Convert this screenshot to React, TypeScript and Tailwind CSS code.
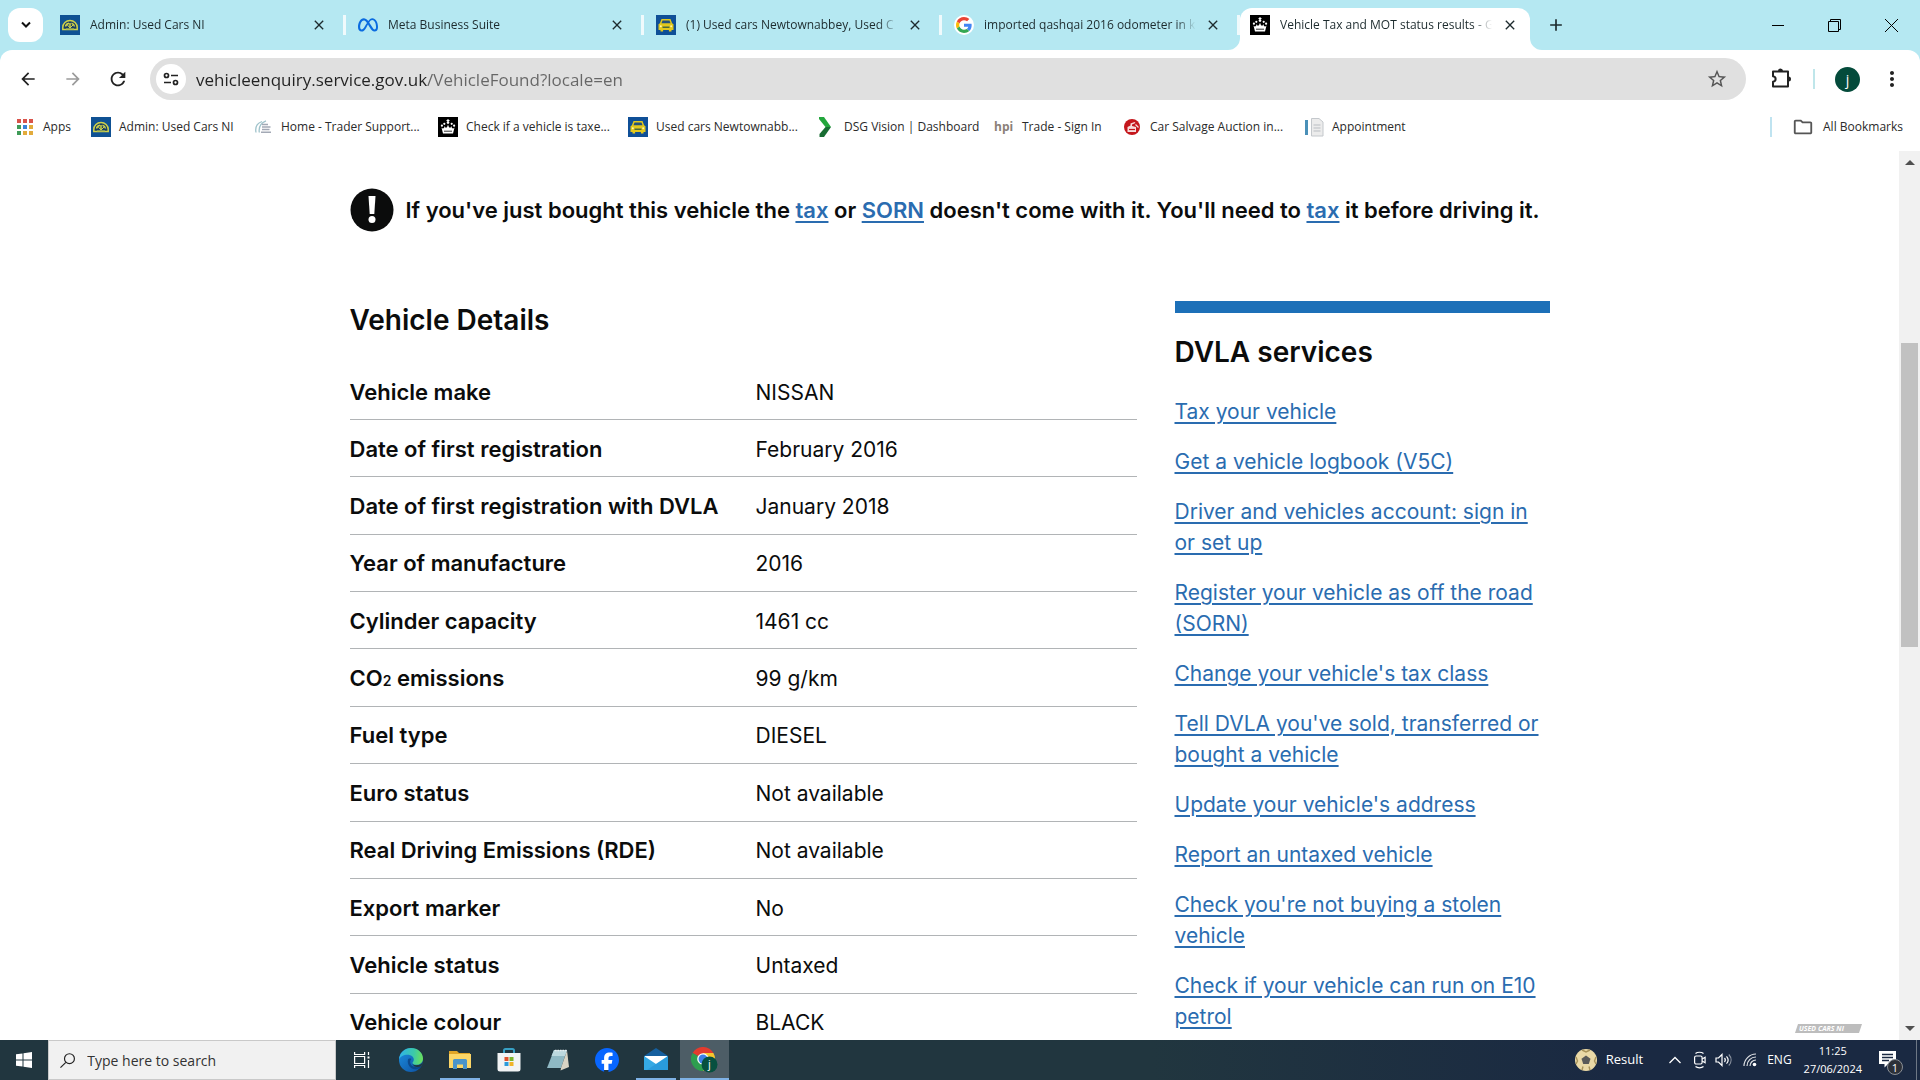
import type { ReactNode } from "react";
import { FaFacebook, FaMeta } from "react-icons/fa6";
import { MdAdd, MdArrowBack, MdArrowForward, MdClose, MdMoreVert, MdOutlineFolder, MdRefresh, MdStarBorder } from "react-icons/md";

/* ---------- site icons ---------- */

function DialIcon() {
  return (
    <svg viewBox="0 0 20 20" className="size-5 shrink-0" aria-hidden="true">
      <rect width="20" height="20" fill="#0f5193" />
      <path d="M2.800 14.500v-2a7.200 7 0 0 1 14.400 0v2z" fill="#173c63" stroke="#cfd24a" strokeWidth="1.500" />
      <path d="M5.500 11.500A4.500 4 0 0 1 9 8.200M11.500 8.300a4.500 4 0 0 1 3 3.200M10 13V8" stroke="#cfd24a" strokeWidth="1.500" fill="none" />
      <path d="M6 13.800h8" stroke="#8fa65a" strokeWidth="1.200" />
      <path d="m10 13-3.500-4M10 13l3-3" stroke="#cfd24a" strokeWidth="1" />
    </svg>
  );
}

function TaxiIcon() {
  return (
    <svg viewBox="0 0 20 20" className="size-5 shrink-0" aria-hidden="true">
      <rect width="20" height="20" fill="#0f4f97" />
      <path d="M5.500 4h9l1.600 4.200 1.400 1V15h-2v1.600h-2.600V15H7.100v1.600H4.500V15h-2V9.200l1.400-1z" fill="#e3c81c" />
      <path d="M6.500 5.400h7l1 2.800h-9z" fill="#24517b" />
      <rect x="6.500" y="11.500" width="7" height="1.500" fill="#4c6a3c" />
      <circle cx="4.800" cy="11.300" r="1" fill="#fff6b0" />
      <circle cx="15.200" cy="11.300" r="1" fill="#fff6b0" />
    </svg>
  );
}

function CrownIcon() {
  return (
    <svg viewBox="0 0 20 20" className="size-5 shrink-0" aria-hidden="true">
      <rect width="20" height="20" fill="#000" />
      <g fill="#fff">
        <circle cx="10" cy="5.600" r="1.300" />
        <rect x="9.500" y="2" width="1" height="3" />
        <rect x="8.500" y="3" width="3" height="1" />
        <circle cx="6.300" cy="6.800" r="1.100" />
        <circle cx="13.700" cy="6.800" r="1.100" />
        <circle cx="3.900" cy="8.700" r="1.100" />
        <circle cx="16.100" cy="8.700" r="1.100" />
        <path d="M3.500 10.500c1.200 1.500 2.400 1.600 3.200-1.500.8 2.600 2.200 2.600 3.300-1.500 1.100 4.100 2.500 4.100 3.300 1.500.8 3.100 2 3 3.200 1.500L15 16.500H5z" />
      </g>
      <path d="M6 14.200h8" stroke="#000" strokeWidth=".8" />
    </svg>
  );
}

function GoogleIcon() {
  return (
    <span className="flex size-5 shrink-0 items-center justify-center rounded-full bg-white">
      <svg viewBox="0 0 48 48" className="size-4" aria-hidden="true">
        <path fill="#EA4335" d="M24 9.500c3.540 0 6.710 1.220 9.210 3.600l6.850-6.850C35.900 2.380 30.470 0 24 0 14.620 0 6.510 5.380 2.560 13.220l7.980 6.190C12.430 13.720 17.740 9.500 24 9.500z" />
        <path fill="#4285F4" d="M46.980 24.550c0-1.570-.15-3.090-.38-4.550H24v9.020h12.940c-.58 2.960-2.260 5.480-4.780 7.180l7.730 6c4.510-4.180 7.090-10.360 7.090-17.650z" />
        <path fill="#FBBC05" d="M10.530 28.590c-.48-1.450-.76-2.990-.76-4.590s.27-3.140.76-4.590l-7.980-6.190C.92 16.460 0 20.120 0 24c0 3.880.92 7.540 2.560 10.780l7.970-6.190z" />
        <path fill="#34A853" d="M24 48c6.480 0 11.930-2.130 15.890-5.810l-7.730-6c-2.150 1.450-4.920 2.300-8.160 2.300-6.260 0-11.570-4.220-13.470-9.910l-7.980 6.190C6.510 42.620 14.620 48 24 48z" />
      </svg>
    </span>
  );
}

function AppsIcon() {
  const colours = ["#d9534a", "#d9534a", "#d9534a", "#3f9b58", "#3b82d6", "#e2ab3c", "#3f9b58", "#e2ab3c", "#e2ab3c"];
  return (
    <svg viewBox="0 0 20 20" className="size-5 shrink-0" aria-hidden="true">
      {colours.map((c, i) => (
        <rect key={i} x={2 + (i % 3) * 6} y={2 + Math.floor(i / 3) * 6} width="4" height="4" fill={c} />
      ))}
    </svg>
  );
}

function TraderIcon() {
  return (
    <svg viewBox="0 0 20 20" className="size-5 shrink-0" fill="none" aria-hidden="true">
      <path d="M9 4.500C4.500 6 2 10 3 15.500M13 3.800C7.500 6 5.500 10 6.300 15.500" stroke="#9fc3cb" strokeWidth="1.300" />
      <path d="M9 7.500h6M9 10h8.500M9 12.500h7.500M8 15.200h10" stroke="#a3a9b5" strokeWidth="1.400" />
    </svg>
  );
}

function DsgIcon() {
  return (
    <svg viewBox="0 0 20 20" className="size-5 shrink-0" aria-hidden="true">
      <path d="M3 0h5l7 10H9.500L3 2z" fill="#23a63c" />
      <path d="M9.500 10H15L8 20H3.500v-3z" fill="#186d33" />
    </svg>
  );
}

function SalvageIcon() {
  return (
    <svg viewBox="0 0 20 20" className="size-5 shrink-0" aria-hidden="true">
      <circle cx="10" cy="10" r="8" fill="#c4161c" />
      <path d="M5.500 15V10l3-1.500V6.500l4-1.500 1 1-3.500 1.600V9l4 1v5z" fill="#f6dcdc" />
      <path d="M7 12.500h6" stroke="#c4161c" strokeWidth="1.200" />
      <path d="m13.500 7.500 3 3" stroke="#f6dcdc" strokeWidth="1.200" />
    </svg>
  );
}

function AppointmentIcon() {
  return (
    <svg viewBox="0 0 20 20" className="size-5 shrink-0" aria-hidden="true">
      <rect x="1" y="3" width="3" height="15" fill="#4a90b8" />
      <path d="M7.500 1.500H15l4 3.500v14H7.500z" fill="#ececec" stroke="#c4c8cc" />
      <path d="M9.500 8h7M9.500 11h7M9.500 14h7" stroke="#b9bdc2" />
    </svg>
  );
}

function HpiIcon() {
  return <span className="w-5 shrink-0 text-[12px] leading-5 font-bold text-[#8b7f79]">hpi</span>;
}

/* ---------- browser chrome ---------- */

const tabs: { title: string; icon: ReactNode }[] = [
  { title: "Admin: Used Cars NI", icon: <DialIcon /> },
  { title: "Meta Business Suite", icon: <FaMeta className="size-5 shrink-0 text-[#0a6be0]" /> },
  { title: "(1) Used cars Newtownabbey, Used C", icon: <TaxiIcon /> },
  { title: "imported qashqai 2016 odometer in k", icon: <GoogleIcon /> },
];

function TabTitle({ children }: { children: ReactNode }) {
  return (
    <span className="ml-[10px] w-[212px] min-w-0 overflow-hidden whitespace-nowrap [mask-image:linear-gradient(to_right,black_calc(100%-20px),transparent)]">
      {children}
    </span>
  );
}

function TabStrip() {
  return (
    <header className="flex h-[50px] shrink-0 bg-[#b5e8f2] text-[12px] text-[#1d2b2e]">
      <button aria-label="Search tabs" className="mt-2 ml-2 flex h-[34px] w-[35px] shrink-0 items-center justify-center rounded-xl bg-white">
        <svg viewBox="0 0 12 12" className="size-3" fill="none" aria-hidden="true">
          <path d="m2 3.500 4 4 4-4" stroke="#111" strokeWidth="2" />
        </svg>
      </button>
      <nav className="ml-[5px] flex min-w-0 flex-1" aria-label="Tabs">
        {tabs.map((t) => (
          <div key={t.title} className="flex max-w-[298px] flex-1 items-center pl-3">
            {t.icon}
            <TabTitle>{t.title}</TabTitle>
            <button aria-label={`Close ${t.title}`} className="ml-auto">
              <MdClose className="size-4" />
            </button>
            <span className="ml-4 h-5 w-[3px] bg-white/80" />
          </div>
        ))}
        <div className="relative mt-2 flex max-w-[290px] flex-1 items-center rounded-t-xl bg-white pr-3 pb-2 pl-[10px]">
          <svg viewBox="0 0 12 12" className="absolute bottom-0 -left-3 size-3" aria-hidden="true">
            <path d="M12 0v12H0A12 12 0 0 0 12 0z" fill="#fff" />
          </svg>
          <svg viewBox="0 0 12 12" className="absolute -right-3 bottom-0 size-3" aria-hidden="true">
            <path d="M0 0v12h12A12 12 0 0 1 0 0z" fill="#fff" />
          </svg>
          <CrownIcon />
          <TabTitle>Vehicle Tax and MOT status results - G</TabTitle>
          <button aria-label="Close Vehicle Tax and MOT status results" className="ml-auto">
            <MdClose className="size-4" />
          </button>
        </div>
        <button aria-label="New tab" className="ml-4">
          <MdAdd className="size-5" />
        </button>
      </nav>
      <div className="flex">
        <button aria-label="Minimise" className="flex w-[57px] items-center justify-center">
          <span className="h-px w-3 bg-black" />
        </button>
        <button aria-label="Restore" className="flex w-[57px] items-center justify-center">
          <svg viewBox="0 0 13 13" className="size-[13px]" fill="none" stroke="#000" aria-hidden="true">
            <path d="M.5 2.500h10v10H.5zM2.500 2.500v-2h10v10h-2" />
          </svg>
        </button>
        <button aria-label="Close window" className="flex w-[57px] items-center justify-center">
          <svg viewBox="0 0 13 13" className="size-[13px]" fill="none" stroke="#000" aria-hidden="true">
            <path d="m0 0 13 13M13 0 0 13" />
          </svg>
        </button>
      </div>
    </header>
  );
}

function AddressBar() {
  return (
    <div className="flex h-[58px] items-center">
      <button aria-label="Back" className="flex w-[55px] justify-center">
        <MdArrowBack className="size-5 text-[#222]" />
      </button>
      <button aria-label="Forward" className="flex w-[35px] justify-center">
        <MdArrowForward className="size-5 text-[#9b9b9b]" />
      </button>
      <button aria-label="Reload" className="flex w-[55px] justify-center">
        <MdRefresh className="size-[22px] text-[#222]" />
      </button>
      <form className="ml-[5px] flex h-[42px] flex-1 items-center rounded-full bg-[#e0e0e0] pl-[6px]">
        <button type="button" aria-label="Site information" className="flex size-[30px] items-center justify-center rounded-full bg-white">
          <svg viewBox="0 0 16 16" className="size-4" fill="none" stroke="#222" strokeWidth="1.700" aria-hidden="true">
            <circle cx="3.500" cy="4.500" r="2" />
            <path d="M8 4.500h7M1 11.500h7" />
            <circle cx="12.500" cy="11.500" r="2" />
          </svg>
        </button>
        <input
          aria-label="Address"
          className="ml-[10px] h-full min-w-0 flex-1 bg-[linear-gradient(to_right,#222_231px,#666_231px)] bg-clip-text text-[17px] text-transparent outline-none"
          defaultValue="vehicleenquiry.service.gov.uk/VehicleFound?locale=en"
        />
        <button type="button" aria-label="Bookmark this tab" className="mr-[18px]">
          <MdStarBorder className="size-[22px] text-[#555]" />
        </button>
      </form>
      <button aria-label="Extensions" className="ml-[23px]">
        <svg viewBox="0 0 24 24" className="size-6" aria-hidden="true">
          <path
            d="M4 4.500h15v15H4v-4.800c3.500-.6 3.500-4.800 0-5.400z"
            fill="none"
            stroke="#222"
            strokeWidth="2"
            strokeLinejoin="round"
          />
          <path d="M9 4a2.500 2.500 0 0 1 5 0zM19.500 9.500a2.500 2.500 0 0 1 0 5z" fill="#222" />
        </svg>
      </button>
      <span className="mx-[20px] h-5 w-[2px] bg-[#bfe6ea]" />
      <button className="flex size-[25px] items-center justify-center rounded-full bg-[#044b3b] text-[14px] text-white">j</button>
      <button aria-label="Menu" className="mr-4 ml-[20px]">
        <MdMoreVert className="size-6 text-[#222]" />
      </button>
    </div>
  );
}

const bookmarks: { title: string; icon: ReactNode; width: string }[] = [
  { title: "Apps", icon: <AppsIcon />, width: "w-[76px]" },
  { title: "Admin: Used Cars NI", icon: <DialIcon />, width: "w-[162px]" },
  { title: "Home - Trader Support...", icon: <TraderIcon />, width: "w-[185px]" },
  { title: "Check if a vehicle is taxe...", icon: <CrownIcon />, width: "w-[190px]" },
  { title: "Used cars Newtownabb...", icon: <TaxiIcon />, width: "w-[188px]" },
  { title: "DSG Vision | Dashboard", icon: <DsgIcon />, width: "w-[178px]" },
  { title: "Trade - Sign In", icon: <HpiIcon />, width: "w-[128px]" },
  { title: "Car Salvage Auction in...", icon: <SalvageIcon />, width: "w-[182px]" },
  { title: "Appointment", icon: <AppointmentIcon />, width: "w-[110px]" },
];

function BookmarksBar() {
  return (
    <nav aria-label="Bookmarks" className="flex h-[43px] items-center pb-[6px] pl-[15px] text-[12px] text-[#2a2a2a]">
      {bookmarks.map((b) => (
        <a key={b.title} href="#" className={`flex shrink-0 items-center gap-2 whitespace-nowrap ${b.width}`}>
          {b.icon}
          {b.title}
        </a>
      ))}
      <span className="mr-[20px] ml-auto h-5 w-[2px] bg-[#bfe3f0]" />
      <a href="#" className="mr-[17px] flex items-center gap-[9px] whitespace-nowrap">
        <MdOutlineFolder className="size-[22px] text-[#555]" />
        All Bookmarks
      </a>
    </nav>
  );
}

/* ---------- page ---------- */

const details: [ReactNode, string][] = [
  ["Vehicle make", "NISSAN"],
  ["Date of first registration", "February 2016"],
  ["Date of first registration with DVLA", "January 2018"],
  ["Year of manufacture", "2016"],
  ["Cylinder capacity", "1461 cc"],
  [<>CO<span className="text-[14px] leading-none">2</span> emissions</>, "99 g/km"],
  ["Fuel type", "DIESEL"],
  ["Euro status", "Not available"],
  ["Real Driving Emissions (RDE)", "Not available"],
  ["Export marker", "No"],
  ["Vehicle status", "Untaxed"],
  ["Vehicle colour", "BLACK"],
];

const services = [
  "Tax your vehicle",
  "Get a vehicle logbook (V5C)",
  "Driver and vehicles account: sign in or set up",
  "Register your vehicle as off the road (SORN)",
  "Change your vehicle's tax class",
  "Tell DVLA you've sold, transferred or bought a vehicle",
  "Update your vehicle's address",
  "Report an untaxed vehicle",
  "Check you're not buying a stolen vehicle",
  "Check if your vehicle can run on E10 petrol",
];

function Link({ children }: { children: ReactNode }) {
  return (
    <a href="#" className="text-[#2a6cb0] underline decoration-2 underline-offset-3">
      {children}
    </a>
  );
}

function EnquiryPage() {
  return (
    <main className="min-w-0 flex-1 overflow-hidden font-['Inter',sans-serif] text-[#0b0c0c]">
      <div className="mx-auto max-w-[1200px] pt-[37px]">
        <div className="flex items-center gap-3 text-[22px] leading-[31px] font-semibold">
          <svg viewBox="0 0 44 44" className="size-11 shrink-0" aria-hidden="true">
            <circle cx="22" cy="22" r="21.500" fill="#0b0c0c" />
            <path d="M18.500 8h7l-1.200 18h-4.600z" fill="#fff" />
            <circle cx="22" cy="31.500" r="3.500" fill="#fff" />
          </svg>
          <p>
            If you've just bought this vehicle the <Link>tax</Link> or <Link>SORN</Link> doesn't come with it. You'll need to{" "}
            <Link>tax</Link> it before driving it.
          </p>
        </div>
        <div className="mt-[69px] flex gap-[38px]">
          <section className="min-w-0 flex-1">
            <h2 className="text-[28px] leading-[38px] font-semibold">Vehicle Details</h2>
            <table className="mt-6 h-[688px] w-full border-collapse">
              <tbody>
                {details.map(([name, value], i) => (
                  <tr key={i} className="border-b border-[#b1b4b6]">
                    <th scope="row" className="w-[406px] pt-0.5 text-left text-[22px] leading-[31px] font-semibold">
                      {name}
                    </th>
                    <td className="pt-0.5 text-[21px] leading-[31px]">{value}</td>
                  </tr>
                ))}
              </tbody>
            </table>
          </section>
          <aside className="w-[375px] shrink-0 border-t-[12px] border-[#1d70b8] pt-5">
            <h2 className="text-[28px] leading-[38px] font-semibold">DVLA services</h2>
            <ul className="mt-[25px] flex flex-col gap-[19px] text-[21px] leading-[31px]">
              {services.map((s) => (
                <li key={s}>
                  <Link>{s}</Link>
                </li>
              ))}
            </ul>
          </aside>
        </div>
      </div>
    </main>
  );
}

function Scrollbar() {
  return (
    <div className="flex w-[21px] shrink-0 flex-col items-center bg-[#f1f1f1]">
      <span className="mt-[9px] border-x-[5px] border-b-[5px] border-x-transparent border-b-[#505050]" />
      <span className="mt-[178px] h-[304px] w-[17px] bg-[#c1c1c1]" />
      <span className="mt-auto mb-[9px] border-x-[5px] border-t-[5px] border-x-transparent border-t-[#505050]" />
    </div>
  );
}

/* ---------- taskbar ---------- */

function EdgeIcon() {
  return (
    <svg viewBox="0 0 24 24" className="size-6" aria-hidden="true">
      <defs>
        <linearGradient id="edgeTop" x1="0" y1=".4" x2="1" y2=".5">
          <stop offset="0" stopColor="#2fb3ea" />
          <stop offset=".6" stopColor="#3cc9a8" />
          <stop offset="1" stopColor="#6be05a" />
        </linearGradient>
        <linearGradient id="edgeBase" x1="0" y1="0" x2="1" y2="1">
          <stop offset="0" stopColor="#1c8fe0" />
          <stop offset="1" stopColor="#0d4fa0" />
        </linearGradient>
      </defs>
      <circle cx="12" cy="12" r="12" fill="url(#edgeBase)" />
      <path d="M0 11.500C.5 4.500 6 0 12 0c7 0 12 5 12 10.500 0 4-3 6.300-6.500 6.300-2.800 0-4-1-4-1.900 0-.8 1.300-1.200 1.300-3.400 0-2.500-2.600-4.700-6.300-4.700C4.500 6.800 1.200 8.700 0 11.500z" fill="url(#edgeTop)" />
      <path d="M9 11.500c-1.300 5 2.500 9.700 7.500 9.700 2.300 0 4.300-.8 5.600-1.900.6-.5-.1-1-.7-.8-5.500 2-10.200-.8-10.200-4.500 0-1.300.6-2.300 1.300-3-1-.7-3-.6-3.500.5z" fill="#0a3f7d" opacity=".75" />
      <path d="M22.300 18.300A12 12 0 0 0 24 12c0 3.500-3 5.200-6.500 5.200-2.800 0-4-1-4-2 0 2.800 4 5 8.800 3.100z" fill="#21363f" />
    </svg>
  );
}

function ExplorerIcon() {
  return (
    <svg viewBox="0 0 24 24" className="size-6" aria-hidden="true">
      <path d="M1 3h8l2 2h11v3H1z" fill="#e0a526" />
      <path d="M1 6h22v14H1z" fill="#fbd667" />
      <path d="M5 21v-8.500A1.500 1.500 0 0 1 6.500 11h11a1.500 1.500 0 0 1 1.500 1.500V21h-4v-4.500H9V21z" fill="#4a94c9" />
    </svg>
  );
}

function StoreIcon() {
  return (
    <svg viewBox="0 0 24 24" className="size-6" aria-hidden="true">
      <path d="M7 6V2.500A1.500 1.500 0 0 1 8.500 1h7A1.500 1.500 0 0 1 17 2.500V6" fill="none" stroke="#37a0c4" strokeWidth="2" />
      <path d="M.5 5h23v16a2.500 2.500 0 0 1-2.500 2.500H3A2.500 2.500 0 0 1 .5 21z" fill="#f2f4f5" />
      <path d="M7.500 9h4v4h-4z" fill="#e0532c" />
      <path d="M12.500 9h4v4h-4z" fill="#7cb52b" />
      <path d="M7.500 14h4v4h-4z" fill="#2a9bdb" />
      <path d="M12.500 14h4v4h-4z" fill="#f0b428" />
    </svg>
  );
}

function NotepadIcon() {
  return (
    <svg viewBox="0 0 24 24" className="size-6" aria-hidden="true">
      <path d="M8 2h13l-6 18H1z" fill="#8fb9c4" />
      <path d="M21 2.500 23 19l-8.500 3.500L15 20z" fill="#d9d4c4" />
      <path d="M8 2h13l-2 6H5.500z" fill="#bcd9df" />
      <path d="M9 2.500h12" stroke="#e9eef0" strokeWidth="1.500" strokeDasharray="1.500 1" />
    </svg>
  );
}

function MailIcon() {
  return (
    <svg viewBox="0 0 24 24" className="size-6" aria-hidden="true">
      <path d="M0 8 12 0l12 8v4H0z" fill="#155f9e" />
      <path d="M1 8h22v9H1z" fill="#fff" />
      <path d="M0 8l12 8 12-8v14H0z" fill="#35a9e4" />
      <path d="M12 16 24 8v14H3z" fill="#1f8fd6" opacity=".55" />
    </svg>
  );
}

function ChromeIcon() {
  return (
    <svg viewBox="0 0 28 26" className="h-[26px] w-7" aria-hidden="true">
      <path d="M12 12 1.600 6A12 12 0 0 1 22.400 6z" fill="#e33b2e" />
      <path d="M12 12V6h10.400A12 12 0 0 1 12 24l5-9z" fill="#f7c52c" />
      <path d="M12 12l5.200 3L12 24A12 12 0 0 1 1.600 6z" fill="#2e9e4f" />
      <circle cx="12" cy="12" r="5.800" fill="#fff" />
      <circle cx="12" cy="12" r="4.500" fill="#3d7fe6" />
      <circle cx="18.500" cy="17.500" r="8" fill="#06503f" />
      <text x="18.500" y="21" textAnchor="middle" fontSize="11" fill="#fff" fontFamily="Open Sans">j</text>
    </svg>
  );
}

const taskIcon = "relative flex w-[49px] items-center justify-center";
const running = "absolute bottom-0 h-[2px] w-10 bg-[#7fb2e5]";

function Taskbar() {
  return (
    <footer className="flex h-10 shrink-0 bg-[linear-gradient(to_right,#21363f_60%,#1a2942_84%)] text-white">
      <button aria-label="Start" className="flex w-12 shrink-0 items-center justify-center">
        <svg viewBox="0 0 16 16" className="size-4" fill="#fff" aria-hidden="true">
          <path d="M0 2.300 6.500 1.400v6.100H0zM7.500 1.200 16 0v7.500H7.500zM0 8.500h6.500v6.100L0 13.700zM7.500 8.500H16V16l-8.500-1.200z" />
        </svg>
      </button>
      <label className="mr-px flex w-[288px] shrink-0 items-center border border-[#c9c9c9] bg-[#f1f1f1] pl-[11px]">
        <svg viewBox="0 0 17 17" className="size-[17px]" fill="none" stroke="#222" strokeWidth="1.300" aria-hidden="true">
          <circle cx="10.500" cy="6.500" r="5.500" />
          <path d="M6.500 10.500.5 16.500" />
        </svg>
        <span className="sr-only">Search</span>
        <input className="ml-3 w-full bg-transparent text-[14px] text-[#333] outline-none placeholder:text-[#333]" placeholder="Type here to search" />
      </label>
      <button aria-label="Task view" className={taskIcon}>
        <svg viewBox="0 0 16 16" className="size-4" fill="none" stroke="#fff" strokeWidth="1.200" aria-hidden="true">
          <path d="M.6 0v2.500h10V0M.6 16v-2.500h10V16M.6 4.500h10v7H.6zM14.500 0v3M14.500 8v8" />
          <path d="M13.500 4.500h2v2h-2z" fill="#fff" stroke="none" />
        </svg>
      </button>
      <button aria-label="Microsoft Edge" className={taskIcon}><EdgeIcon /></button>
      <button aria-label="File Explorer" className={taskIcon}><ExplorerIcon /><span className={running} /></button>
      <button aria-label="Microsoft Store" className={taskIcon}><StoreIcon /></button>
      <button aria-label="Notepad" className={taskIcon}><NotepadIcon /></button>
      <button aria-label="Facebook" className={taskIcon}>
        <span className="flex size-6 items-center justify-center rounded-full bg-[radial-gradient(circle,#fff_60%,transparent_61%)]">
          <FaFacebook className="size-6 text-[#0866ff]" />
        </span>
      </button>
      <button aria-label="Mail" className={taskIcon}><MailIcon /><span className={running} /></button>
      <button aria-label="Google Chrome" className={`${taskIcon} bg-[#4d5d66]`}>
        <ChromeIcon />
        <span className="absolute inset-x-0 bottom-0 h-[2px] bg-[#7fb2e5]" />
      </button>

      <div className="ml-auto flex items-center">
        <button className="flex items-center gap-[9px] text-[13px]">
          <svg viewBox="0 0 22 22" className="size-[22px]" aria-hidden="true">
            <circle cx="11" cy="11" r="11" fill="#ead9a6" />
            <path d="m11 6.500 4.500 3.300-1.700 5.200H8.200L6.500 9.800z" fill="#5a5a58" />
            <path d="m7 1 4 2 4-2M1 8l1.500 4L1 15M21 8l-1.500 4 1.500 3M7 21l1-3.500M15 21l-1-3.500" stroke="#a8935a" strokeWidth="1.400" fill="none" />
          </svg>
          Result
        </button>
        <button aria-label="Show hidden icons" className="ml-[26px]">
          <svg viewBox="0 0 12 8" className="h-2 w-3" fill="none" stroke="#fff" strokeWidth="1.300" aria-hidden="true"><path d="m.5 7 5.500-5.500L11.500 7" /></svg>
        </button>
        <button aria-label="Meet now" className="ml-[12px]">
          <svg viewBox="0 0 14 18" className="h-[18px] w-[14px]" fill="none" stroke="#fff" strokeWidth="1.200" aria-hidden="true">
            <rect x="1.600" y="5" width="7.500" height="8" rx="1.500" />
            <path d="m9.100 8 3-1.800v5.600l-3-1.800M2.500 2.500C4.500.8 8.500.8 10.500 2.500M2.500 15.500c2 1.700 6 1.700 8 0" />
          </svg>
        </button>
        <button aria-label="Volume" className="ml-[8px]">
          <svg viewBox="0 0 18 14" className="h-[14px] w-[18px]" fill="none" stroke="#fff" strokeWidth="1.200" aria-hidden="true">
            <path d="M1 5h2.500L7 1.500v11L3.500 9H1zM9.500 5c1 1.200 1 2.800 0 4M11.500 3.300c2 2.200 2 5.200 0 7.400" />
            <path d="M13.800 1.500c3 3.300 3 7.700 0 11" opacity=".5" />
          </svg>
        </button>
        <button aria-label="Network" className="ml-[10px]">
          <svg viewBox="0 0 14 14" className="size-[14px]" fill="none" stroke="#fff" strokeWidth="1.200" aria-hidden="true">
            <path d="M1 13C1 6.500 6.500 1 13 1M4 13c0-5 4-9 9-9M7 13c0-3.300 2.700-6 6-6" opacity=".85" />
            <circle cx="11.500" cy="11.500" r="1.800" fill="#fff" stroke="none" />
          </svg>
        </button>
        <button className="ml-[10px] text-[12px]">ENG</button>
        <button className="ml-[12px] text-center text-[11px] leading-[18px]">
          11:25
          <br />
          27/06/2024
        </button>
        <button aria-label="Notifications" className="relative mr-[19px] ml-[17px] flex size-[18px]">
          <svg viewBox="0 0 18 18" className="size-[18px]" aria-hidden="true">
            <path d="M0 0h17v13H9l-3.500 3.500V13H0z" fill="#fff" />
            <path d="M3 3.500h11M3 6.500h11M3 9.500h7" stroke="#1a2942" strokeWidth="1.300" />
          </svg>
          <span className="absolute top-2 left-2 flex size-4 items-center justify-center rounded-full border border-[#8a8f96] bg-[#2c3038] text-[11px] leading-none">
            1
          </span>
        </button>
        <span className="mr-[3px] h-10 w-px bg-[#6d7785]" />
      </div>
    </footer>
  );
}

export default function App() {
  return (
    <div className="relative flex h-screen flex-col overflow-hidden bg-white font-['Open_Sans',sans-serif]">
      <TabStrip />
      <div className="shrink-0 bg-[#b5e8f2]">
        <div className="rounded-t-xl bg-white">
          <AddressBar />
          <BookmarksBar />
        </div>
      </div>
      <div className="relative flex min-h-0 flex-1">
        <EnquiryPage />
        <Scrollbar />
        <span className="absolute right-[58px] bottom-[7px] w-[67px] bg-[#bdbdbd] pl-1 text-[7px] leading-[9px] font-bold whitespace-nowrap text-white italic [clip-path:polygon(3px_0,100%_0,calc(100%-3px)_100%,0_100%)]">
          USED CARS NI
        </span>
      </div>
      <Taskbar />
    </div>
  );
}
